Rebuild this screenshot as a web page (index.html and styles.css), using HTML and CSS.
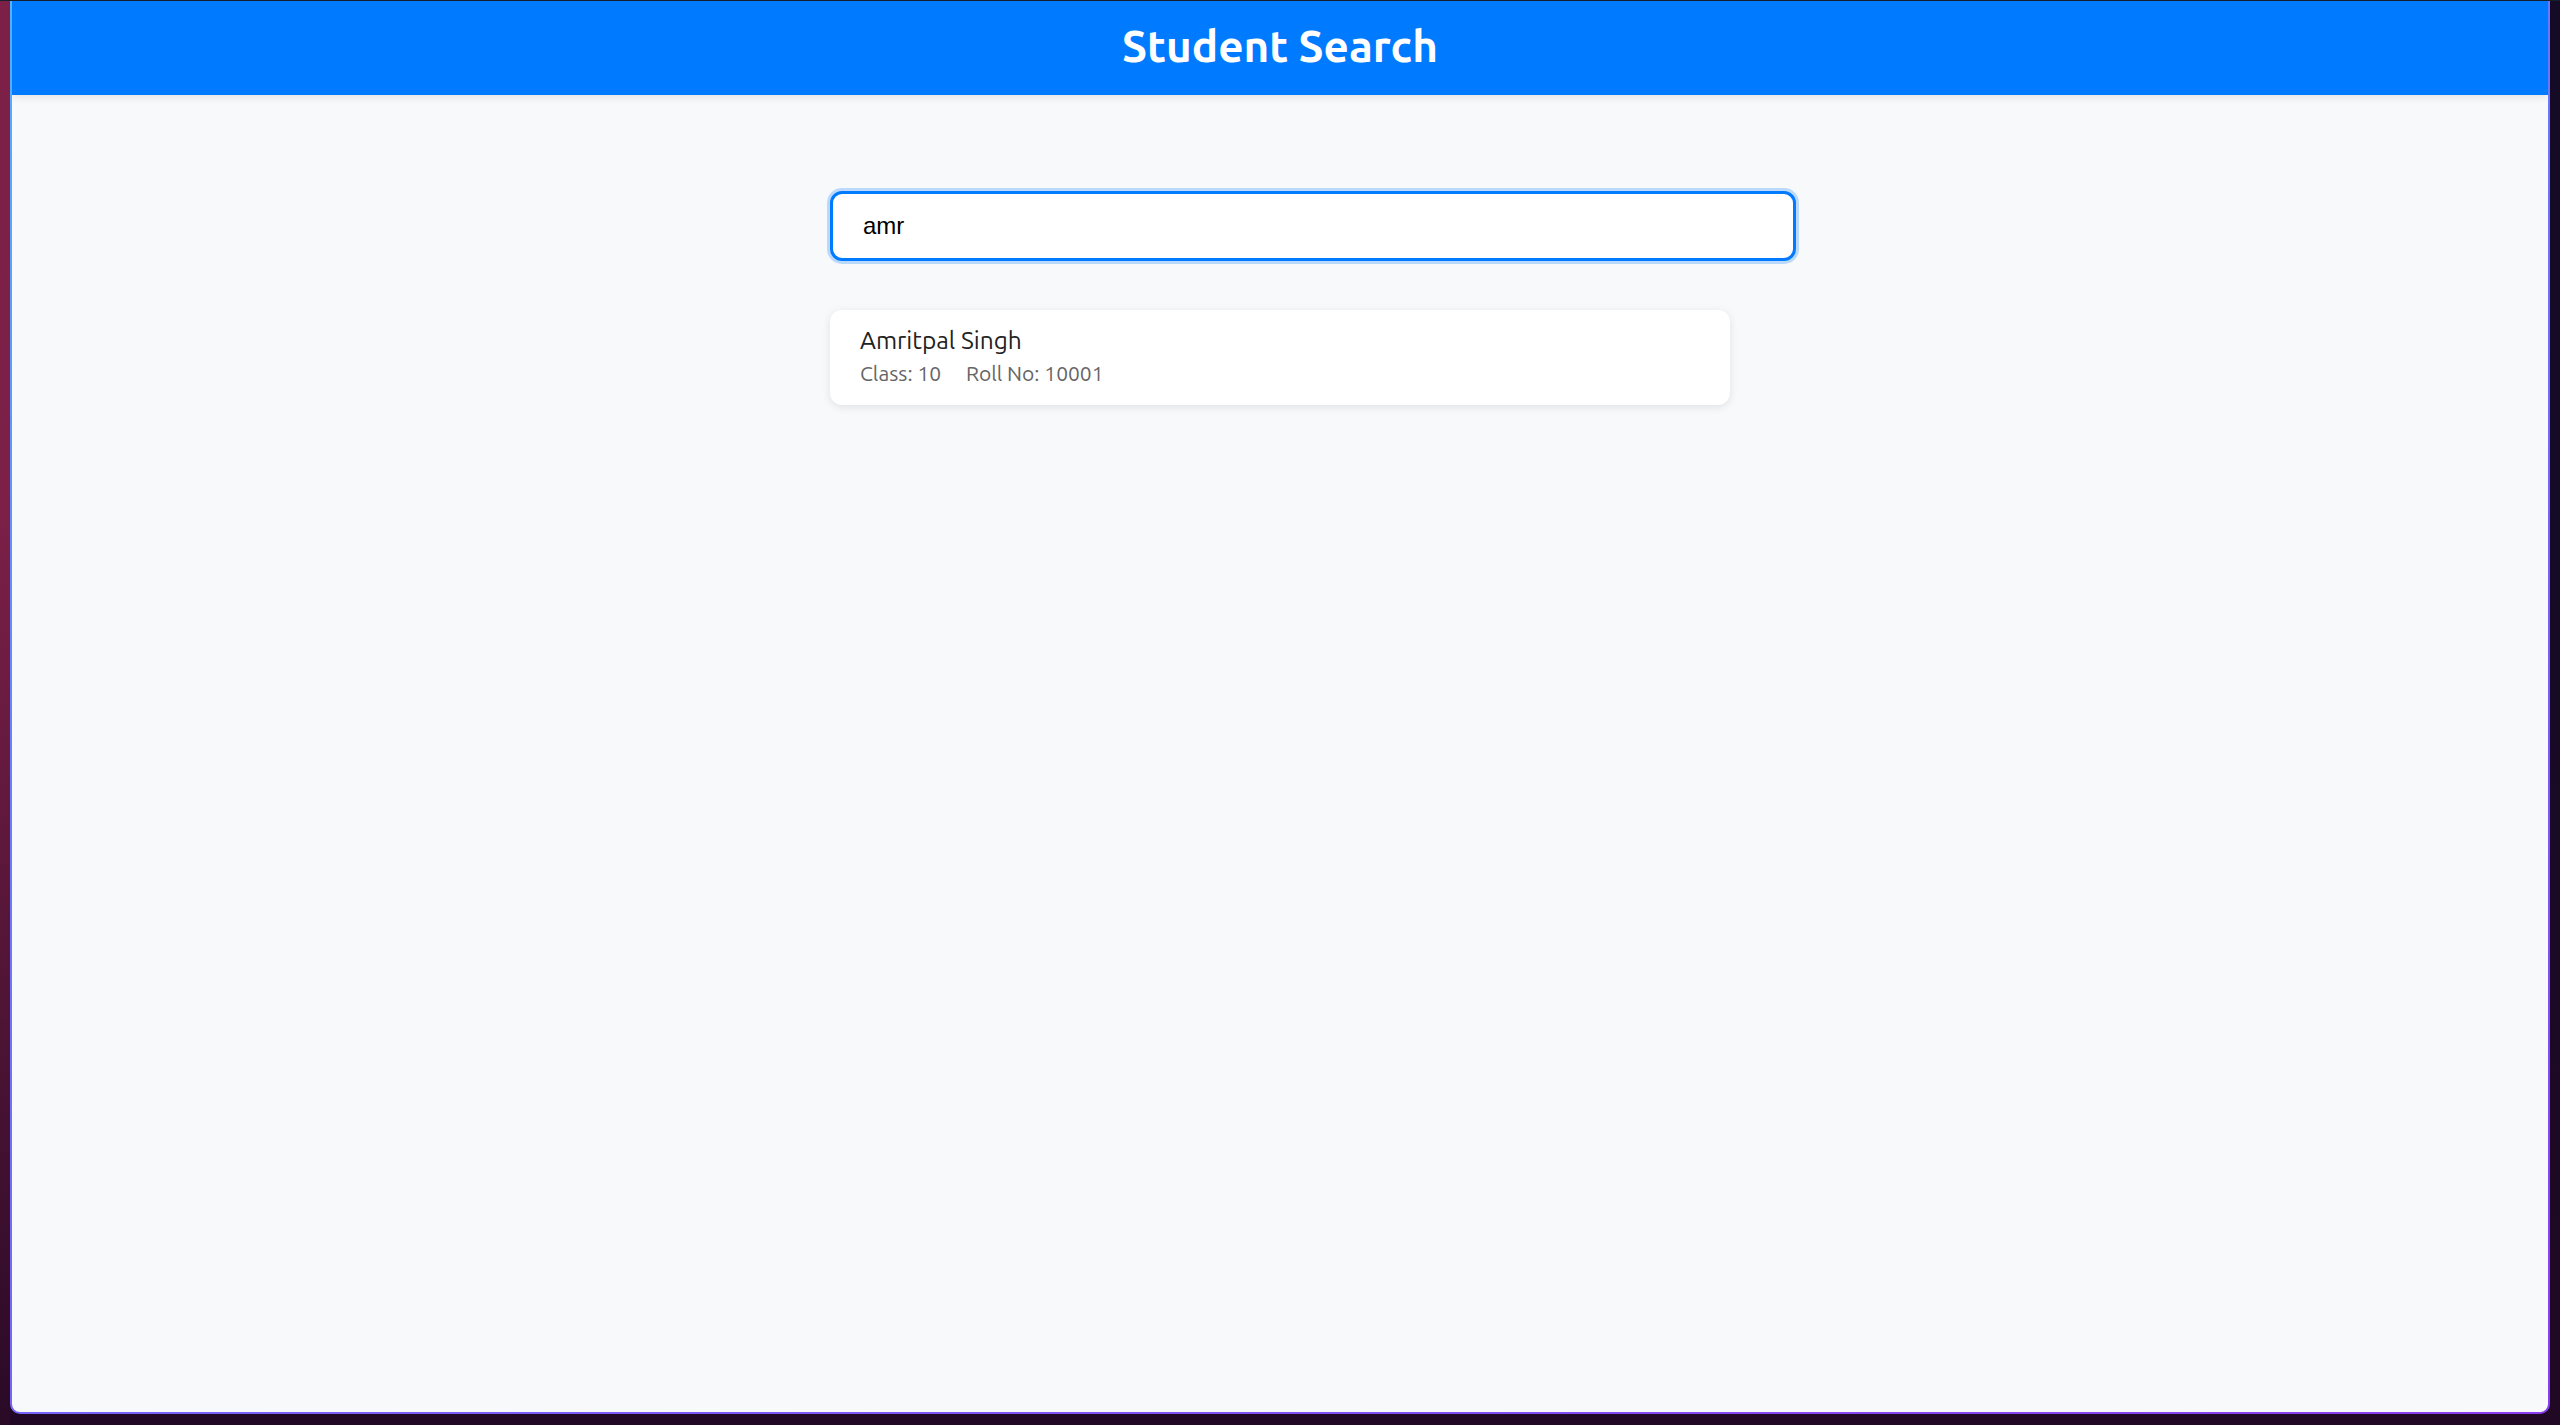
FILE: index.html
```html
<!DOCTYPE html>
<html lang="en">
<head>
<meta charset="utf-8">
<title>Student Search</title>
<link rel="stylesheet" href="styles.css">
</head>
<body>
<div class="window">
  <div class="app">
    <header class="app-header">
      <h1 class="app-title">Student Search</h1>
    </header>
    <main class="container">
      <input class="search-input" type="text" value="amr">
      <div class="results">
        <div class="student-card">
          <div class="student-name">Amritpal Singh</div>
          <div class="student-details">
            <span class="detail">Class: 10</span>
            <span class="detail">Roll No: 10001</span>
          </div>
        </div>
      </div>
    </main>
  </div>
</div>
</body>
</html>
```

FILE: styles.css
```css
html, body {
  height: 100%;
}
body {
  margin: 0;
  box-sizing: border-box;
  padding: 1px 10px 11px 10px;
  background:
    linear-gradient(180deg, rgba(20, 6, 28, 0) 0%, rgba(20, 6, 28, 0) 35%, rgba(34, 8, 36, 0.92) 100%),
    linear-gradient(90deg, #7d2048 0, #7d2048 10px, #150b26 10px, #150b26 100%);
  font-family: "Ubuntu", "Noto Sans", sans-serif;
}
.window {
  height: 100%;
  box-sizing: border-box;
  padding: 0 2px 2px 2px;
  border-radius: 0 0 10px 10px;
  background: linear-gradient(160deg, #4fb4ff 0%, #6a7dff 35%, #8a3cf0 100%);
  position: relative;
}
.window::before {
  content: "";
  position: absolute;
  left: -10px;
  right: -10px;
  top: -1px;
  height: 1px;
  background: #161d2b;
}
.app {
  height: 100%;
  background: #f8f9fa;
  border-radius: 0 0 8px 8px;
  overflow: hidden;
}
.app-header {
  height: 94px;
  background: #007bff;
  display: flex;
  align-items: center;
  justify-content: center;
  box-shadow: 0 2px 8px rgba(0, 0, 0, 0.1);
  position: relative;
}
.app-title {
  margin: 0 0 3px 0;
  color: #fff;
  font-size: 44px;
  font-weight: 700;
  line-height: 1.2;
}
.container {
  width: 900px;
  margin: 96px auto 0 auto;
}
.search-input {
  display: block;
  box-sizing: content-box;
  width: 100%;
  margin: 0 0 49px 0;
  padding: 18px 30px;
  border: 3px solid #007bff;
  border-radius: 12px;
  background: #fff;
  box-shadow: 0 0 0 3px rgba(0, 123, 255, 0.25);
  outline: none;
  font-family: "Liberation Sans", Arial, sans-serif;
  font-size: 24px;
  color: #000;
}
.student-card {
  background: #fff;
  border-radius: 12px;
  box-shadow: 0 2px 9px rgba(0, 0, 0, 0.1);
  padding: 16px 30px 18px 30px;
}
.student-name {
  font-size: 24.5px;
  color: #222;
  line-height: 1.2;
  margin-bottom: 6px;
}
.student-details {
  font-size: 21px;
  color: #666;
  line-height: 1.2;
}
.detail {
  margin-right: 20px;
}
```
